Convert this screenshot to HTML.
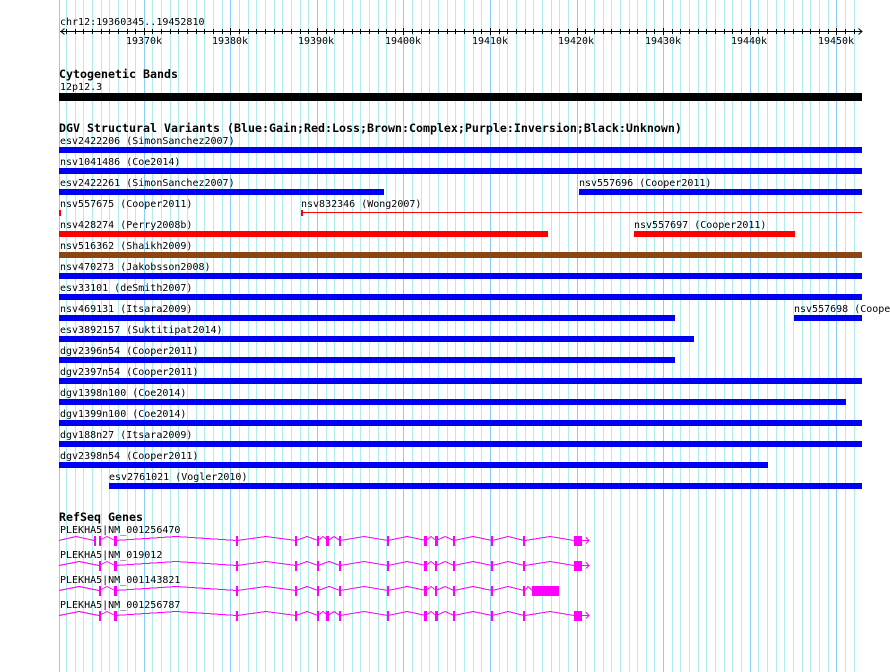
<!DOCTYPE html>
<html><head><meta charset="utf-8"><title>Tracks</title>
<style>
html,body{margin:0;padding:0;background:#fff;width:890px;height:672px;overflow:hidden}
svg{display:block}
text{font-family:"DejaVu Sans Mono","Liberation Mono",monospace;font-size:10px;fill:#000}
.b{font-weight:bold;font-size:11.63px}
.m{text-anchor:middle}
.i{fill:none;stroke:#f0f;stroke-width:1;shape-rendering:crispEdges}
</style></head><body>
<svg width="890" height="672" viewBox="0 0 890 672" xmlns="http://www.w3.org/2000/svg">
<defs>
<path id="minor" d="M66 0v672M75 0v672M83 0v672M92 0v672M101 0v672M109 0v672M118 0v672M127 0v672M135 0v672M152 0v672M161 0v672M170 0v672M178 0v672M187 0v672M196 0v672M204 0v672M213 0v672M222 0v672M239 0v672M248 0v672M256 0v672M265 0v672M274 0v672M282 0v672M291 0v672M300 0v672M308 0v672M326 0v672M334 0v672M343 0v672M352 0v672M360 0v672M369 0v672M378 0v672M386 0v672M395 0v672M412 0v672M421 0v672M429 0v672M438 0v672M447 0v672M455 0v672M464 0v672M473 0v672M481 0v672M499 0v672M507 0v672M516 0v672M525 0v672M533 0v672M542 0v672M551 0v672M559 0v672M568 0v672M585 0v672M594 0v672M603 0v672M611 0v672M620 0v672M629 0v672M637 0v672M646 0v672M654 0v672M672 0v672M680 0v672M689 0v672M698 0v672M706 0v672M715 0v672M724 0v672M732 0v672M741 0v672M758 0v672M767 0v672M776 0v672M784 0v672M793 0v672M802 0v672M810 0v672M819 0v672M828 0v672M845 0v672M854 0v672"/>
<path id="major" d="M144 0v672M230 0v672M317 0v672M403 0v672M490 0v672M577 0v672M663 0v672M750 0v672M836 0v672"/>
<clipPath id="t1"><rect x="60" y="29" width="803" height="5"/></clipPath>
<clipPath id="t2"><rect x="60" y="28" width="803" height="7"/></clipPath>
<g id="common" fill="#f0f">
<path class="i" d="M99 -.5L107 -4.500L115 -.5L176 -4.500L237 -.5L266 -4.500L296 -.5L307 -4.500L318 -.5M340 -.5L364 -4.500L388 -.5L407 -4.500L426 -.5L431 -4.500L436 -.5L445 -4.500L454 -.5L473 -4.500L492 -.5L508 -4.500L524 -.5"/>
<path d="M99 -5h2v10h-2zM114 -5h3v10h-3zM236 -5h2v10h-2zM295 -5h2v10h-2zM317 -5h2v10h-2zM339 -5h2v10h-2zM387 -5h2v10h-2zM424 -5h3v10h-3zM453 -5h2v10h-2zM491 -5h2v10h-2zM523 -5h2v10h-2z"/>
</g>
<g id="tail"><path class="i" d="M525 -.5L550 -4.500L574 -.5M582 -.5h7M586 -3.500l3 3l-3 3"/><rect x="574" y="-5" width="8" height="10" fill="#f0f"/></g>
</defs>

<g transform="translate(.5,0)" fill="none" stroke-width="1">
<use href="#minor" stroke="#afeeee"/>
<path d="M59 0v672" stroke="#87cefa"/>
<use href="#major" stroke="#87cefa"/>
<g stroke="#000" clip-path="url(#t1)"><use href="#minor"/></g>
<g stroke="#000" clip-path="url(#t2)"><use href="#major"/></g>
</g>
<rect x="60" y="31" width="802" height="1" fill="#000"/>
<path d="M64.500 28.500l-3.500 3l3.500 3M858.500 28.500l3.500 3l-3.500 3" fill="none" stroke="#000"/>

<text x="60" y="25">chr12:19360345..19452810</text>
<text class="m" x="144" y="44">19370k</text>
<text class="m" x="230" y="44">19380k</text>
<text class="m" x="316" y="44">19390k</text>
<text class="m" x="403" y="44">19400k</text>
<text class="m" x="490" y="44">19410k</text>
<text class="m" x="576" y="44">19420k</text>
<text class="m" x="663" y="44">19430k</text>
<text class="m" x="749" y="44">19440k</text>
<text class="m" x="836" y="44">19450k</text>

<text class="b" x="59" y="78">Cytogenetic Bands</text>
<text x="60" y="90">12p12.3</text>
<rect x="59" y="93" width="803" height="8" fill="#000"/>

<text class="b" x="59" y="132">DGV Structural Variants (Blue:Gain;Red:Loss;Brown:Complex;Purple:Inversion;Black:Unknown)</text>

<text x="60" y="144">esv2422206 (SimonSanchez2007)</text>
<text x="60" y="165">nsv1041486 (Coe2014)</text>
<text x="60" y="186">esv2422261 (SimonSanchez2007)</text>
<text x="579" y="186">nsv557696 (Cooper2011)</text>
<text x="60" y="207">nsv557675 (Cooper2011)</text>
<text x="301" y="207">nsv832346 (Wong2007)</text>
<text x="60" y="228">nsv428274 (Perry2008b)</text>
<text x="634" y="228">nsv557697 (Cooper2011)</text>
<text x="60" y="249">nsv516362 (Shaikh2009)</text>
<text x="60" y="270">nsv470273 (Jakobsson2008)</text>
<text x="60" y="291">esv33101 (deSmith2007)</text>
<text x="60" y="312">nsv469131 (Itsara2009)</text>
<text x="794" y="312">nsv557698 (Cooper2011)</text>
<text x="60" y="333">esv3892157 (Suktitipat2014)</text>
<text x="60" y="354">dgv2396n54 (Cooper2011)</text>
<text x="60" y="375">dgv2397n54 (Cooper2011)</text>
<text x="60" y="396">dgv1398n100 (Coe2014)</text>
<text x="60" y="417">dgv1399n100 (Coe2014)</text>
<text x="60" y="438">dgv188n27 (Itsara2009)</text>
<text x="60" y="459">dgv2398n54 (Cooper2011)</text>
<text x="109" y="480">esv2761021 (Vogler2010)</text>

<g fill="#0000f0">
<rect x="59" y="147" width="803" height="6"/>
<rect x="59" y="168" width="803" height="6"/>
<rect x="59" y="189" width="325" height="6"/>
<rect x="579" y="189" width="283" height="6"/>
<rect x="59" y="273" width="803" height="6"/>
<rect x="59" y="294" width="803" height="6"/>
<rect x="59" y="315" width="616" height="6"/>
<rect x="794" y="315" width="68" height="6"/>
<rect x="59" y="336" width="635" height="6"/>
<rect x="59" y="357" width="616" height="6"/>
<rect x="59" y="378" width="803" height="6"/>
<rect x="59" y="399" width="787" height="6"/>
<rect x="59" y="420" width="803" height="6"/>
<rect x="59" y="441" width="803" height="6"/>
<rect x="59" y="462" width="709" height="6"/>
<rect x="109" y="483" width="753" height="6"/>
</g>
<g fill="#f00">
<rect x="59" y="210" width="2" height="6"/>
<rect x="301" y="210" width="2" height="6"/>
<rect x="302" y="212" width="560" height="1"/>
<rect x="59" y="231" width="489" height="6"/>
<rect x="634" y="231" width="161" height="6"/>
</g>
<rect x="59" y="252" width="803" height="6" fill="#8b4513"/>

<text class="b" x="59" y="521">RefSeq Genes</text>
<text x="60" y="533">PLEKHA5|NM_001256470</text>
<text x="60" y="558">PLEKHA5|NM_019012</text>
<text x="60" y="583">PLEKHA5|NM_001143821</text>
<text x="60" y="608">PLEKHA5|NM_001256787</text>

<g transform="translate(0,541)">
<use href="#common"/><use href="#tail"/>
<path class="i" d="M59 -.5L76 -4.500L94 -.5M318 -.5L323 -4.500L328 -.5L334 -4.500L340 -.5"/>
<path fill="#f0f" d="M94 -5h2v10h-2zM326 -5h3v10h-3zM435 -5h3v10h-3z"/>
</g>
<g transform="translate(0,566)">
<use href="#common"/><use href="#tail"/>
<path class="i" d="M59 -.5L79 -4.500L99 -.5M318 -.5L329 -4.500L340 -.5"/>
<path fill="#f0f" d="M435 -5h2v10h-2z"/>
</g>
<g transform="translate(0,591)">
<use href="#common"/>
<path class="i" d="M59 -.5L79 -4.500L99 -.5M318 -.5L329 -4.500L340 -.5M525 -.5L528 -4.500L532 -.5"/>
<path fill="#f0f" d="M435 -5h2v10h-2zM532 -5h27v10h-27z"/>
</g>
<g transform="translate(0,616)">
<use href="#common"/><use href="#tail"/>
<path class="i" d="M59 -.5L79 -4.500L99 -.5M318 -.5L323 -4.500L328 -.5L334 -4.500L340 -.5"/>
<path fill="#f0f" d="M326 -5h3v10h-3zM435 -5h3v10h-3z"/>
</g>
</svg>
</body></html>
